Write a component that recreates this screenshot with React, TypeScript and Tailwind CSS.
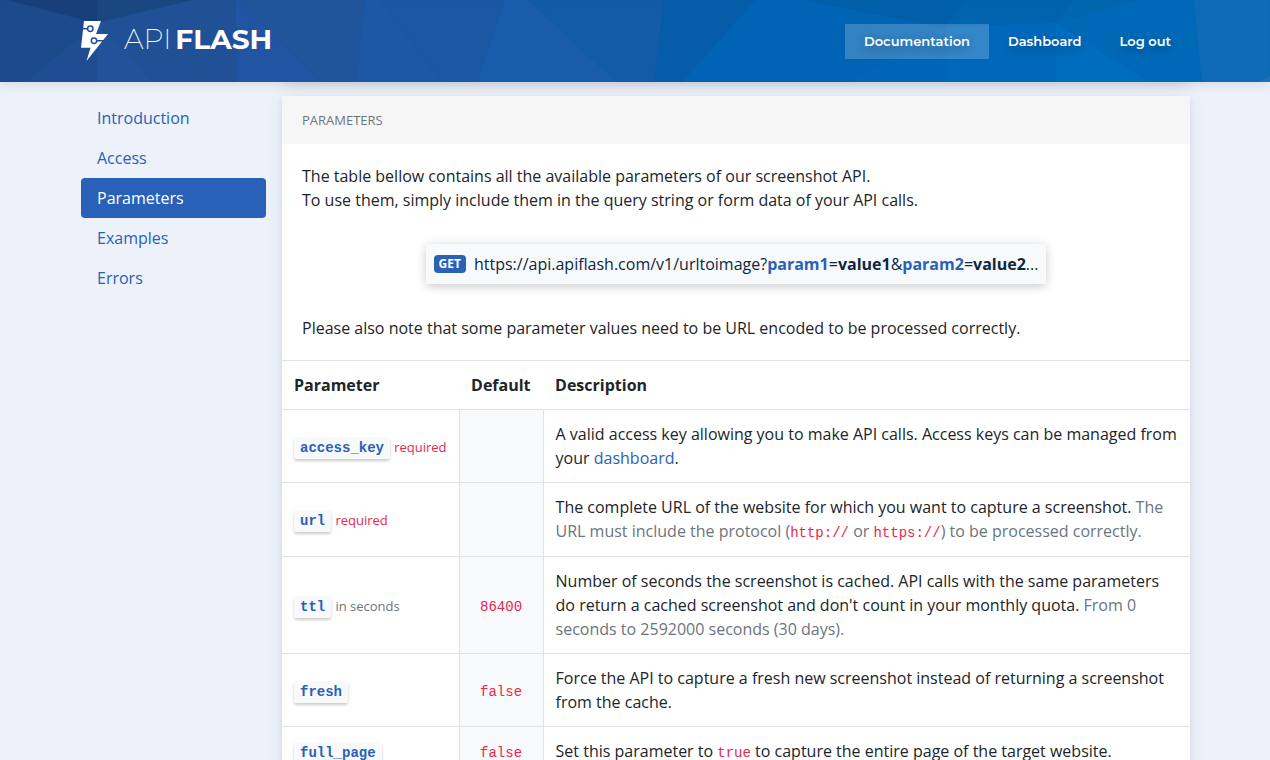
import type { ReactNode } from "react";

const links = ["Introduction", "Access", "Parameters", "Examples", "Errors"];

const facets = [
  { points: "0,0 9,0 97,23 25,82 0,82", fill: "#1c4a8a" },
  { points: "9,0 97,0 97,23", fill: "#193f7b" },
  { points: "97,0 193,0 97,23", fill: "#1b4780" },
  { points: "97,23 97,82 25,82", fill: "#204d91" },
  { points: "193,0 236,0 237,82 153,82 97,23", fill: "#205197" },
  { points: "97,23 153,82 97,82", fill: "#21529a" },
  { points: "236,0 238,0 322,82 237,82", fill: "#2155a1" },
  { points: "238,0 365,0 356,82 322,82", fill: "#20549b" },
  { points: "365,0 379,0 442,82 356,82", fill: "#1c58a4" },
  { points: "379,0 505,0 477,82 442,82", fill: "#1b57a2" },
  { points: "505,0 528,0 617,82 477,82", fill: "#195cab" },
  { points: "528,0 664,0 655,82 617,82", fill: "#125ba6" },
  { points: "664,0 755,0 682,82 655,82", fill: "#065ca8" },
  { points: "755,0 805,0 945,27 849,82 682,82", fill: "#0063b3" },
  { points: "805,0 966,0 945,27", fill: "#005fa8" },
  { points: "966,0 1058,0 1056,23 945,27", fill: "#0063ae" },
  { points: "1058,0 1073,0 1056,23", fill: "#0062a8" },
  { points: "1073,0 1140,0 1056,23", fill: "#0066ae" },
  { points: "945,27 948,82 849,82", fill: "#0065b7" },
  { points: "945,27 1056,23 1056,82 948,82", fill: "#0068bb" },
  { points: "1056,23 1150,82 1056,82", fill: "#006cbe" },
  { points: "1140,0 1194,0 1202,82 1150,82 1056,23", fill: "#0069b7" },
  { points: "1194,0 1270,0 1270,76 1259,82 1202,82", fill: "#0f6bb6" },
  { points: "1259,82 1270,76 1270,82", fill: "#2070ba" },
];

function Code({ children }: { children: ReactNode }) {
  return (
    <code className="font-['Liberation_Mono',monospace] text-sm leading-[21px] text-[#e8274b]">
      {children}
    </code>
  );
}

function Muted({ children }: { children: ReactNode }) {
  return <span className="text-[#6c757d]">{children}</span>;
}

const rows: {
  name: string;
  note?: string;
  required?: boolean;
  value?: string;
  description: ReactNode;
}[] = [
  {
    name: "access_key",
    note: "required",
    required: true,
    description: (
      <>
        A valid access key allowing you to make API calls. Access keys can be
        managed from your{" "}
        <a href="#dashboard" className="text-[#2961b8]">
          dashboard
        </a>
        .
      </>
    ),
  },
  {
    name: "url",
    note: "required",
    required: true,
    description: (
      <>
        The complete URL of the website for which you want to capture a
        screenshot.{" "}
        <Muted>
          The URL must include the protocol (<Code>http://</Code> or{" "}
          <Code>https://</Code>) to be processed correctly.
        </Muted>
      </>
    ),
  },
  {
    name: "ttl",
    note: "in seconds",
    value: "86400",
    description: (
      <>
        Number of seconds the screenshot is cached. API calls with the same
        parameters do return a cached screenshot and don't count in your monthly
        quota. <Muted>From 0 seconds to 2592000 seconds (30 days).</Muted>
      </>
    ),
  },
  {
    name: "fresh",
    value: "false",
    description:
      "Force the API to capture a fresh new screenshot instead of returning a screenshot from the cache.",
  },
  {
    name: "full_page",
    value: "false",
    description: (
      <>
        Set this parameter to <Code>true</Code> to capture the entire page of
        the target website.
      </>
    ),
  },
];

function Header() {
  return (
    <header className="sticky top-0 z-10 bg-[#0063b3] shadow-[0_1px_12px_rgba(0,0,0,0.12)]">
      <svg
        className="absolute inset-0 h-full w-full"
        viewBox="0 0 1270 82"
        preserveAspectRatio="none"
        aria-hidden="true"
      >
        {facets.map((f) => (
          <polygon key={f.points} points={f.points} fill={f.fill} stroke={f.fill} strokeWidth="0.5" />
        ))}
      </svg>
      <div className="relative mx-auto flex h-[82px] max-w-[1140px] items-center justify-between pr-[15px] pl-4 font-[Montserrat,Inter,sans-serif] text-white">
        <a href="#home" className="flex items-center gap-4">
          <svg width="27" height="40" viewBox="0 0 27 40" aria-hidden="true">
            <path d="M3 0H20L15 13H27L5.5 40L9.5 26.8H0Z" fill="#fff" />
            <g fill="#fff" stroke="#205197" strokeWidth="1.5">
              <path d="M2 7.7H6.5M16 19.8H22.5" />
              <circle cx="9.3" cy="7.7" r="2.7" />
              <circle cx="13" cy="19.8" r="2.7" />
            </g>
          </svg>
          <span className="flex gap-1 pb-1 text-[28px] leading-9">
            <span className="font-extralight">API</span>
            <span className="font-bold">FLASH</span>
          </span>
        </a>
        <nav className="flex text-[13px] leading-[19px] font-semibold [text-shadow:0_3px_10px_rgba(0,0,0,0.3)]">
          <a href="#documentation" className="bg-white/20 px-[19px] py-2">
            Documentation
          </a>
          <a href="#dashboard" className="px-[19px] py-2">
            Dashboard
          </a>
          <a href="#logout" className="px-[19px] py-2">
            Log out
          </a>
        </nav>
      </div>
    </header>
  );
}

export default function App() {
  return (
    <div className="min-h-screen bg-[#ecf1fa] font-['Open_Sans',sans-serif] text-base text-[#212529]">
      <Header />
      <div className="mx-auto flex max-w-[1140px] gap-4 pr-[15px] pl-4">
        <nav className="flex w-[185px] shrink-0 flex-col pt-4">
          {links.map((link) => (
            <a
              key={link}
              href={"#" + link.toLowerCase()}
              className={
                link === "Parameters"
                  ? "rounded bg-[#2961b8] px-4 py-2 text-white"
                  : "px-4 py-2 text-[#2961b8]"
              }
            >
              {link}
            </a>
          ))}
        </nav>
        <main className="-mt-2 min-w-0 flex-1">
          <div className="h-2 bg-white shadow-[0_0_20px_rgba(0,0,0,0.05),0_3px_8px_rgba(0,0,0,0.08)]" />
          <section className="mt-3.5 bg-white shadow-[0_0_20px_rgba(0,0,0,0.05),0_3px_8px_rgba(0,0,0,0.08)]">
            <h2 className="bg-[#f6f6f6] px-5 py-3 text-[13px] leading-6 text-[#6c757d]">
              PARAMETERS
            </h2>
            <div className="p-5">
              <p>
                The table bellow contains all the available parameters of our
                screenshot API.
                <br />
                To use them, simply include them in the query string or form
                data of your API calls.
              </p>
              <div className="my-8 flex justify-center">
                <div className="flex items-center gap-2 bg-[#f8f9fb] p-2 text-[#0c2742] shadow-[0_0_15px_rgba(0,0,0,0.07),0_3px_8px_rgba(0,0,0,0.14)]">
                  <span className="rounded bg-[#2961b8] px-[5px] text-xs leading-[18px] font-bold text-white">
                    GET
                  </span>
                  <span>
                    https://api.apiflash.com/v1/urltoimage?
                    <b className="text-[#2961b8]">param1</b>=<b>value1</b>&amp;
                    <b className="text-[#2961b8]">param2</b>=<b>value2</b>...
                  </span>
                </div>
              </div>
              <p>
                Please also note that some parameter values need to be URL
                encoded to be processed correctly.
              </p>
            </div>
            <table className="w-full border-collapse">
              <thead>
                <tr className="border-y border-[#dee2e6] text-left">
                  <th className="p-3">Parameter</th>
                  <th className="w-[84px] p-3">Default</th>
                  <th className="p-3">Description</th>
                </tr>
              </thead>
              <tbody>
                {rows.map((row) => (
                  <tr key={row.name} className="border-b border-[#dee2e6]">
                    <td className="p-3 whitespace-nowrap">
                      <code className="rounded-[3px] bg-[#f8f9fb] px-1.5 py-[3px] font-['Liberation_Mono',monospace] text-sm leading-[21px] font-bold text-[#2961b8] shadow-[0_2px_3px_rgba(0,0,0,0.2)]">
                        {row.name}
                      </code>
                      {row.note && (
                        <>
                          {" "}
                          <small className={row.required ? "text-[13px] text-[#e8274b]" : "text-[13px] text-[#6c757d]"}>
                            {row.note}
                          </small>
                        </>
                      )}
                    </td>
                    <td className="border-x border-[#dee2e6] bg-[#f8f9fb] p-3 text-center">
                      {row.value && <Code>{row.value}</Code>}
                    </td>
                    <td className="p-3">{row.description}</td>
                  </tr>
                ))}
              </tbody>
            </table>
          </section>
        </main>
      </div>
    </div>
  );
}
